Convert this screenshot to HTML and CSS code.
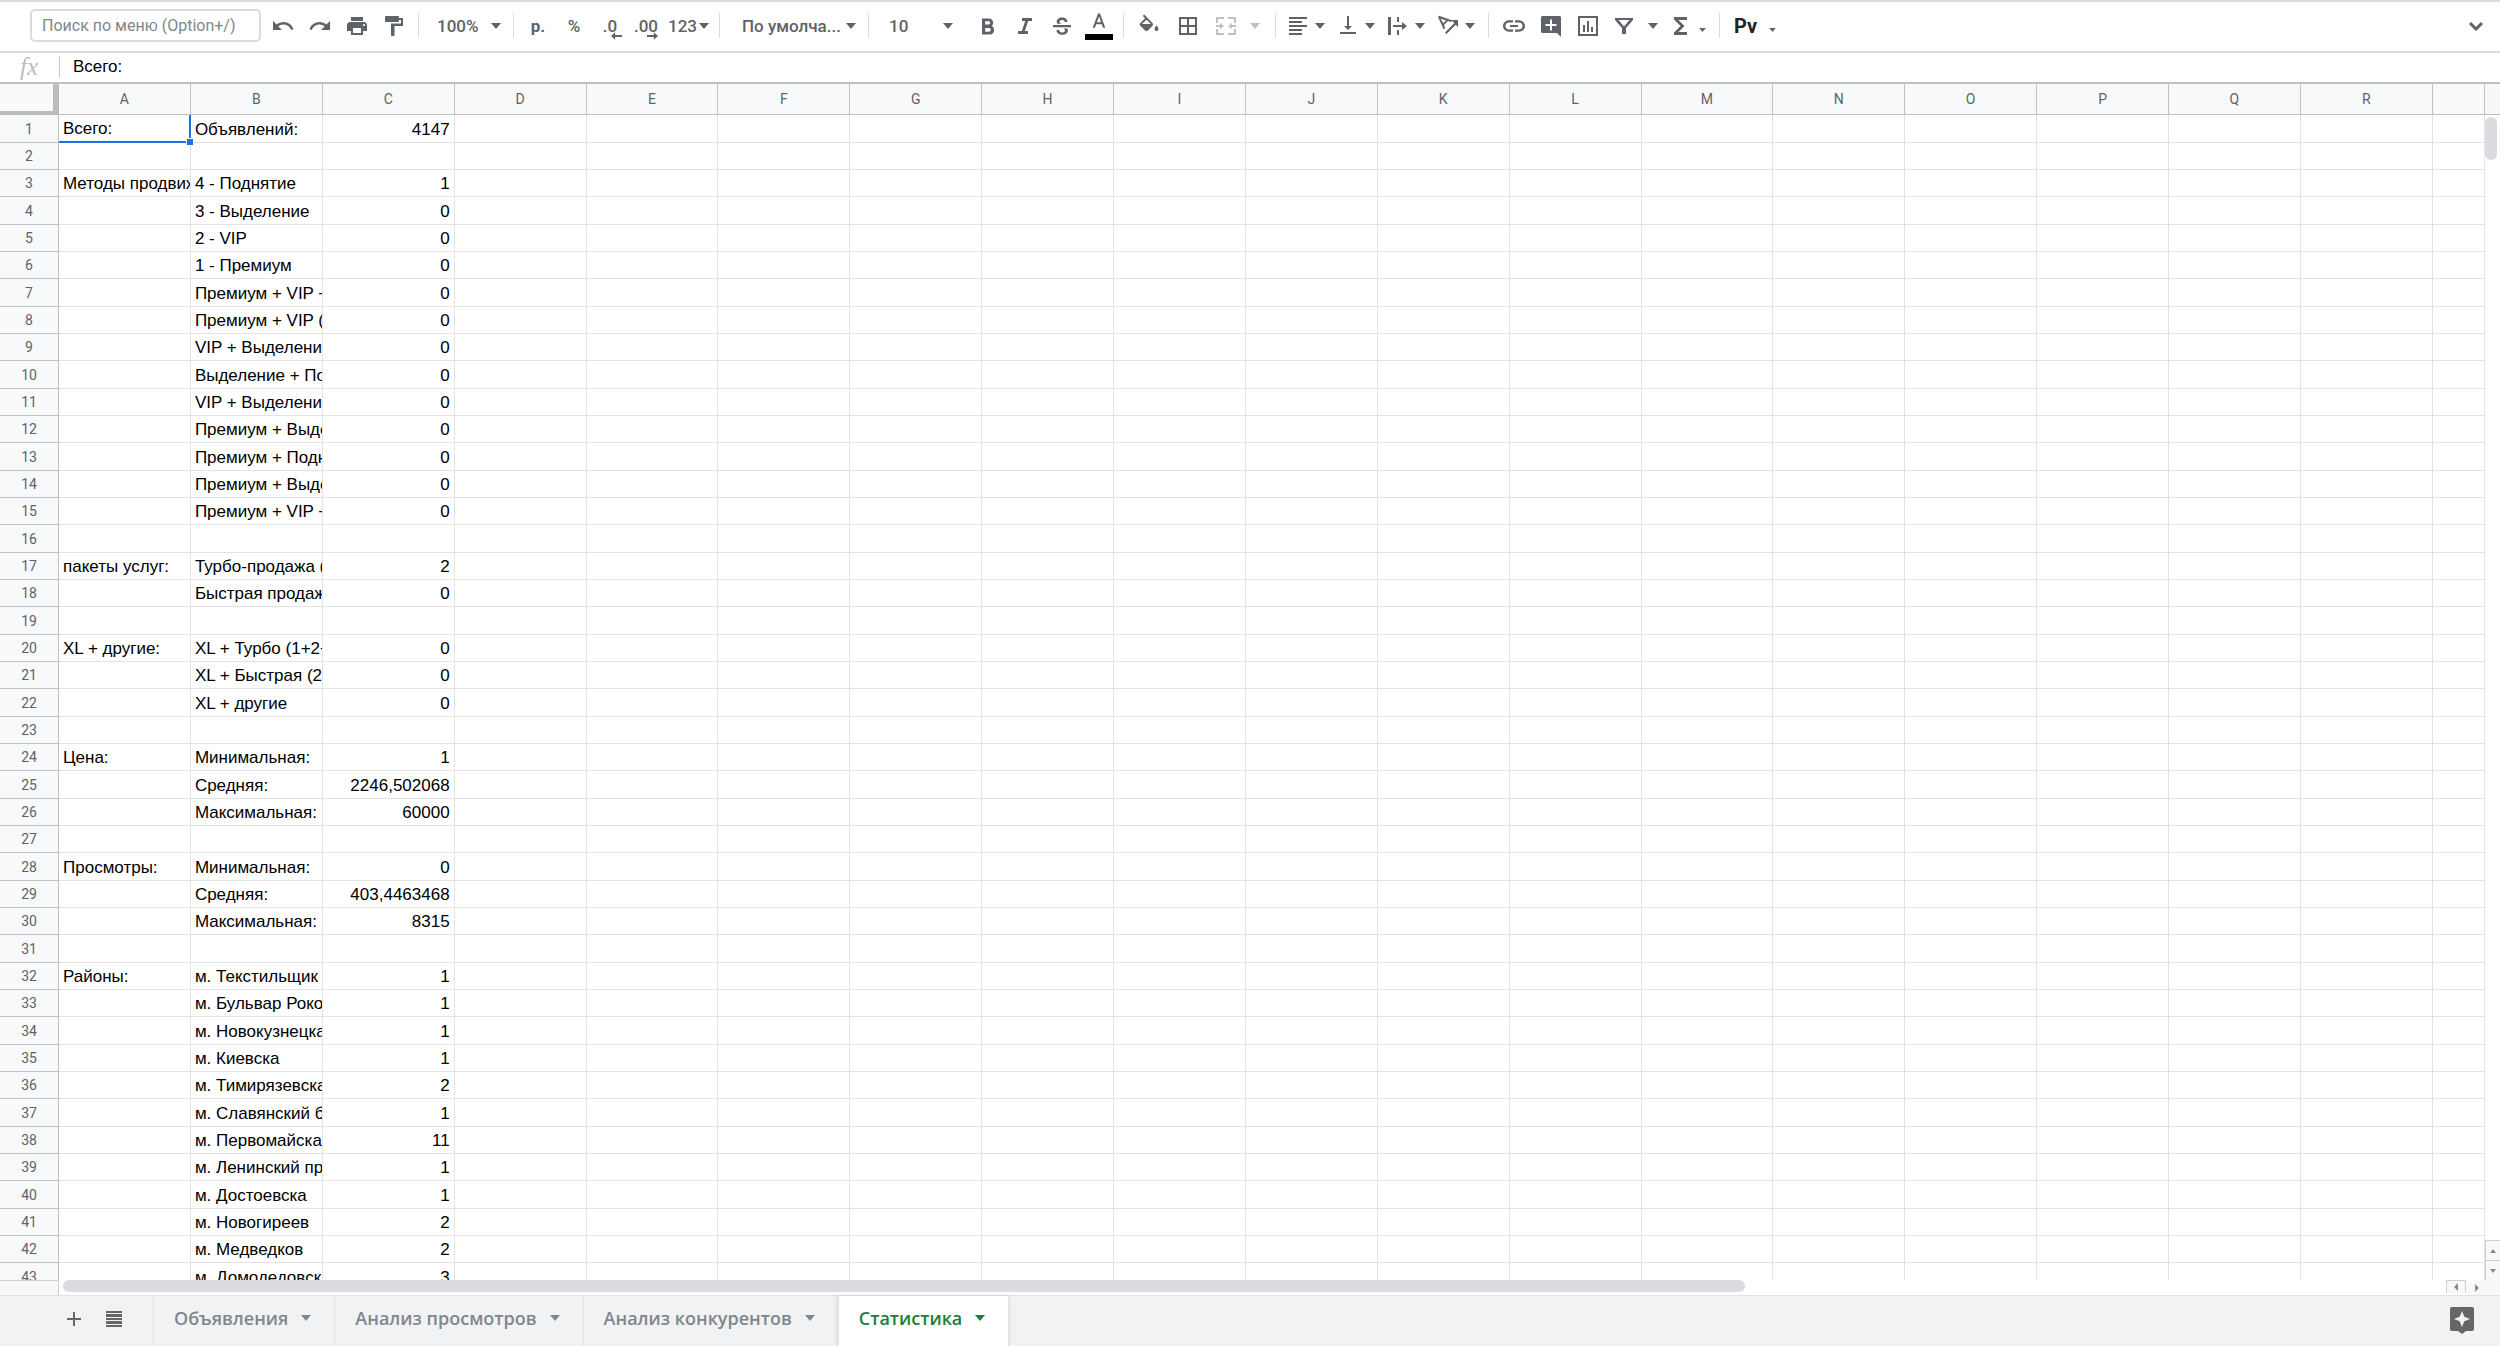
FILE: index.html
```html
<!DOCTYPE html>
<html lang="ru">
<head>
<meta charset="utf-8">
<title>Статистика</title>
<link rel="stylesheet" href="styles.css">
</head>
<body>
<svg class="sprite" aria-hidden="true">
  <symbol id="caret" viewBox="0 0 10 6"><path d="M0 0h10L5 6z"/></symbol>
</svg>

<header class="toolbar">
  <input class="menu-search" type="text" aria-label="Поиск по меню" placeholder="Поиск по меню (Option+/)">
  <div class="group">
    <button class="tool" aria-label="Отменить"><svg viewBox="0 0 24 24"><path d="M12.5 8c-2.65 0-5.05.99-6.9 2.6L2 7v9h9l-3.62-3.62c1.39-1.16 3.16-1.88 5.12-1.88 3.54 0 6.55 2.31 7.6 5.5l2.37-.78C21.080 11.030 17.150 8 12.500 8z"/></svg></button>
    <button class="tool" aria-label="Повторить"><svg viewBox="0 0 24 24"><path d="M18.400 10.600C16.550 8.990 14.150 8 11.500 8c-4.650 0-8.580 3.030-9.960 7.220L3.900 16c1.050-3.190 4.050-5.500 7.600-5.500 1.950 0 3.730.72 5.120 1.880L13 16h9V7l-3.600 3.600z"/></svg></button>
    <button class="tool" aria-label="Печать"><svg viewBox="0 0 24 24"><path d="M19 8H5c-1.660 0-3 1.340-3 3v6h4v4h12v-4h4v-6c0-1.660-1.340-3-3-3zm-3 11H8v-5h8v5zm3-7c-.55 0-1-.45-1-1s.45-1 1-1 1 .45 1 1-.45 1-1 1zm-1-9H6v4h12V3z"/></svg></button>
    <button class="tool" aria-label="Копировать форматирование"><svg viewBox="0 0 24 24"><path d="M17 4V3c0-.55-.45-1-1-1H4c-.55 0-1 .45-1 1v4c0 .55.45 1 1 1h12c.55 0 1-.45 1-1V6h2v3.500H9V21c0 .55.45 1 1 1h1.500c.55 0 1-.45 1-1v-9H21V4h-4z"/></svg></button>
  </div>
  <span class="sep"></span>
  <label class="combo combo-zoom"><select aria-label="Масштаб"><option>100%</option></select><svg class="caret"><use href="#caret"/></svg></label>
  <span class="sep"></span>
  <div class="group narrow">
    <button class="tool strong">р.</button>
    <button class="tool">%</button>
    <button class="tool decimals" aria-label="Уменьшить число знаков">.0<svg viewBox="0 0 12 8"><path d="M4.500 0v3H12v2H4.500v3L0 4z"/></svg></button>
    <button class="tool decimals" aria-label="Увеличить число знаков">.00<svg viewBox="0 0 12 8"><path d="M7.500 0v3H0v2h7.500v3L12 4z"/></svg></button>
  </div>
  <button class="formats">123<svg class="caret"><use href="#caret"/></svg></button>
  <span class="sep"></span>
  <label class="combo combo-font"><select aria-label="Шрифт"><option>По умолча...</option></select><svg class="caret"><use href="#caret"/></svg></label>
  <span class="sep"></span>
  <label class="combo combo-size"><select aria-label="Размер шрифта"><option>10</option></select><svg class="caret"><use href="#caret"/></svg></label>
  <div class="group text-style">
    <button class="tool" aria-label="Полужирный"><svg viewBox="0 0 24 24"><path d="M15.600 11.800c1-.7 1.600-1.800 1.600-2.800 0-2.800-1.900-4.500-4.200-4.500H6v16h7.900c2.300 0 4.200-1.900 4.200-4.300 0-1.800-1-3.500-2.500-4.400zM9.200 7.200h3.300c.9 0 1.600.7 1.600 1.600s-.7 1.700-1.600 1.700H9.200zm3.800 10.500H9.200V14H13c1 0 1.800.8 1.800 1.800s-.8 1.900-1.800 1.900z"/></svg></button>
    <button class="tool" aria-label="Курсив"><svg viewBox="0 0 24 24"><path d="M9 4v3h3.200l-3.400 10H5v3h10v-3h-3.200l3.400-10H19V4z"/></svg></button>
    <button class="tool" aria-label="Зачеркнутый"><svg viewBox="0 0 24 24"><path d="M3 11h18v2.200H3zM17.500 8h-2.700c0-1.400-1-2.100-2.700-2.100-1.600 0-2.600.7-2.600 1.800 0 .8.600 1.500 2 2H7.300C6.900 9.100 6.700 8.400 6.700 7.700 6.700 5.200 8.900 3.500 12.100 3.500c3.300 0 5.400 1.800 5.400 4.500zM6.500 16h2.700c.1 1.600 1.200 2.400 3 2.400 1.700 0 2.700-.7 2.700-1.900 0-.9-.4-1.500-1.400-2h4c.3.600.4 1.200.4 2 0 2.600-2.200 4.300-5.600 4.300-3.500 0-5.700-1.800-5.800-4.800z"/></svg></button>
    <button class="tool color-tool" aria-label="Цвет текста"><svg viewBox="0 0 24 24"><path d="M10.800 3L4.500 20h2.700l1.400-4h6.800l1.400 4h2.700L13.200 3zm-1.300 10.500L12 6.500l2.500 7z"/></svg><span class="swatch"></span></button>
  </div>
  <span class="sep"></span>
  <div class="group spaced">
    <button class="tool" aria-label="Цвет заливки"><svg viewBox="0 0 24 24"><path d="M15.500 8.900L7.200.6 5.800 2l2.300 2.300-5 5c-.6.6-.6 1.500 0 2.100l5.300 5.300c.6.6 1.600.6 2.200 0l5-5c.5-.700.500-1.700-.1-2.800zM5 10l4.500-4.300L14 10zM19.500 11.500s-2 2.200-2 3.500a2 2 0 0 0 4 0c0-1.300-2-3.500-2-3.500z"/></svg></button>
    <button class="tool" aria-label="Границы"><svg viewBox="0 0 24 24"><path d="M3 3v18h18V3zm8 16H5v-6h6zm0-8H5V5h6zm8 8h-6v-6h6zm0-8h-6V5h6z"/></svg></button>
    <button class="tool-wide muted" aria-label="Объединить ячейки"><svg class="icon" viewBox="0 0 24 24"><path d="M2 3h8v2H4v4H2zM14 3h8v6h-2V5h-6zM2 15h2v4h6v2H2zM20 15h2v6h-8v-2h6zM2 11h4V9l4 3-4 3v-2H2zM22 11h-4V9l-4 3 4 3v-2h4z"/></svg><svg class="caret"><use href="#caret"/></svg></button>
  </div>
  <span class="sep"></span>
  <div class="group">
    <button class="tool-menu" aria-label="Горизонтальное выравнивание"><svg class="icon" viewBox="0 0 24 24"><path d="M3 3h18v2H3zM3 7h13v2H3zM3 11h18v2H3zM3 15h13v2H3zM3 19h13v2H3z"/></svg><svg class="caret"><use href="#caret"/></svg></button>
    <button class="tool-menu" aria-label="Вертикальное выравнивание"><svg class="icon" viewBox="0 0 24 24"><path d="M16 12h-3V2h-2v10H8l4 4zM4 18h16v2H4z"/></svg><svg class="caret"><use href="#caret"/></svg></button>
    <button class="tool-menu" aria-label="Перенос текста"><svg class="icon" viewBox="0 0 24 24"><path d="M2 3h3v18H2zM11 3h2v5h-2zM11 16h2v5h-2zM7 11h9V8l5 4-5 4v-3H7z"/></svg><svg class="caret"><use href="#caret"/></svg></button>
    <button class="tool-menu" aria-label="Поворот текста"><svg class="icon" viewBox="0 0 24 24"><path d="M2 3l1.200-1.200L16.500 6.500 15 8l-3-1-4 4 1.200 3L7.700 15.500zM4.600 4.500l2.600 4.800 2.700-2.900zM22 6v7l-2.300-2.300L10.500 20 9 18.500l9.200-9.300L15.800 6z"/></svg><svg class="caret"><use href="#caret"/></svg></button>
  </div>
  <span class="sep"></span>
  <div class="group">
    <button class="tool" aria-label="Вставить ссылку"><svg viewBox="0 0 24 24"><path d="M3.400 12c0-1.900 1.600-3.500 3.600-3.500h4V6.300H7C3.900 6.300 1 8.800 1 12s2.900 5.700 6 5.700h4v-2.200H7c-2 0-3.600-1.600-3.600-3.500zM8 13.100h8v-2.200H8zM17 6.300h-4v2.200h4c2 0 3.600 1.600 3.600 3.500s-1.600 3.500-3.600 3.500h-4v2.200h4c3.100 0 6-2.500 6-5.700s-2.900-5.700-6-5.700z"/></svg></button>
    <button class="tool" aria-label="Добавить комментарий"><svg viewBox="0 0 24 24"><path d="M22 3.500c0-.8-.7-1.500-1.500-1.500h-17C2.700 2 2 2.700 2 3.500v14c0 .8.700 1.500 1.500 1.500H18l4 4zM17.500 12H13v4.500h-2V12H6.500v-2H11V5.500h2V10h4.500z"/></svg></button>
    <button class="tool" aria-label="Вставить диаграмму"><svg viewBox="0 0 24 24"><path d="M2 2v20h20V2zm18 18H4V4h16zM7 11h2v7H7zM11 7h2v11h-2zM15 13h2v5h-2z"/></svg></button>
    <button class="tool-wide" aria-label="Фильтр"><svg class="icon" viewBox="0 0 24 24"><path d="M3 4h18v2l-7 8v6h-4v-6L3 6zm3.500 2l5.500 6.500L17.500 6z"/></svg><svg class="caret"><use href="#caret"/></svg></button>
    <button class="tool-mini" aria-label="Функции"><svg class="icon" viewBox="0 0 24 24"><path d="M18 3H5v2.500l6.500 6.500L5 18.500V21h13v-3H9.500l6-6-6-6H18z"/></svg><svg class="caret"><use href="#caret"/></svg></button>
  </div>
  <span class="sep"></span>
  <button class="input-tools" aria-label="Способ ввода">Pv<svg class="caret"><use href="#caret"/></svg></button>
  <button class="collapse" aria-label="Скрыть меню"><svg viewBox="0 0 16 10"><path d="M2 2l6 6 6-6" fill="none" stroke="#5f6368" stroke-width="3"/></svg></button>
</header>

<div class="formula-bar">
  <span class="fx">fx</span>
  <input class="formula" type="text" aria-label="Строка формул" value="Всего:">
</div>

<main class="sheet">
  <div class="grid-view">
    <table class="cells">
      <colgroup id="columns"></colgroup>
      <thead><tr id="column-names"></tr></thead>
      <tbody id="rows"></tbody>
    </table>
  </div>
  <div class="v-scroll">
    <div class="v-head"></div>
    <div class="v-thumb"></div>
    <button class="v-step" aria-label="Вверх"><svg viewBox="0 0 10 6"><path d="M2 5h6L5 1z"/></svg></button>
    <button class="v-step" aria-label="Вниз"><svg viewBox="0 0 10 6"><path d="M2 1h6L5 5z"/></svg></button>
  </div>
  <div class="h-scroll">
    <div class="h-head"></div>
    <div class="h-track"><div class="h-thumb"></div></div>
    <button class="h-step" aria-label="Влево"><svg viewBox="0 0 6 8"><path d="M5 0v8L1 4z"/></svg></button>
    <button class="h-step plain" aria-label="Вправо"><svg viewBox="0 0 6 8"><path d="M1 0v8l4-4z"/></svg></button>
  </div>
</main>

<footer class="tab-bar">
  <div class="tab-tools">
    <button aria-label="Добавить лист"><svg viewBox="0 0 16 16"><path d="M7 1h2v6h6v2H9v6H7V9H1V7h6z"/></svg></button>
    <button aria-label="Все листы"><svg viewBox="0 0 16 16"><path d="M0 0h16v2H0zM0 3h16v3H0zM0 7h16v2H0zM0 10h16v3H0zM0 14h16v2H0z"/></svg></button>
  </div>
  <nav class="tabs">
    <button class="tab">Объявления<svg class="caret"><use href="#caret"/></svg></button>
    <button class="tab">Анализ просмотров<svg class="caret"><use href="#caret"/></svg></button>
    <button class="tab">Анализ конкурентов<svg class="caret"><use href="#caret"/></svg></button>
    <button class="tab active">Статистика<svg class="caret"><use href="#caret"/></svg></button>
  </nav>
  <button class="explore" aria-label="Анализ данных"><svg viewBox="0 0 24 27"><path fill-rule="evenodd" d="M2 0h20a2 2 0 0 1 2 2v20a2 2 0 0 1-2 2h-6l-4 3-4-3H2a2 2 0 0 1-2-2V2a2 2 0 0 1 2-2zm10 4l-2.300 5.700L4 12l5.700 2.300L12 20l2.300-5.700L20 12l-5.700-2.300z"/></svg></button>
</footer>
<script src="app.js"></script>
</body>
</html>
```
FILE: styles.css
```css
* {
  box-sizing: border-box;
}

body {
  margin: 0;
  height: 100vh;
  display: flex;
  flex-direction: column;
  overflow: hidden;
  background: #fff;
  font-family: Roboto, "Noto Sans", sans-serif;
  color: #000;
}

button,
input,
select {
  font: inherit;
  color: inherit;
  border: 0;
  padding: 0;
  margin: 0;
  background: none;
}

svg {
  display: block;
  flex: none;
  fill: currentColor;
}

.sprite {
  position: absolute;
  width: 0;
  height: 0;
}

.caret {
  width: 10px;
  height: 6px;
}

/* Toolbar */

.toolbar {
  flex: none;
  display: flex;
  align-items: center;
  height: 53px;
  padding: 0 16px 2px 30px;
  border-top: 2px solid #dadce0;
  border-bottom: 2px solid #dadce0;
  color: #5f6368;
  font-size: 17px;
  font-weight: 500;
}

.menu-search {
  width: 231px;
  height: 33px;
  margin-right: 3px;
  padding: 0 10px;
  border: 2px solid #dadce0;
  border-radius: 5px;
  font-size: 16px;
  font-weight: 400;
}

.menu-search::placeholder {
  color: #80868b;
  opacity: 1;
}

.group {
  display: flex;
}

.spaced {
  gap: 2px;
}

.text-style {
  margin-left: 10px;
}

.sep {
  width: 1px;
  height: 25px;
  margin: 0 6px;
  background: #dadce0;
}

.tool {
  display: flex;
  align-items: center;
  justify-content: center;
  width: 37px;
  height: 36px;
}

.narrow .tool {
  width: 36px;
}

.tool svg,
.icon {
  width: 24px;
  height: 24px;
}

.strong {
  font-weight: 700;
}

.tool.decimals {
  position: relative;
}

.tool.decimals svg {
  position: absolute;
  right: 6px;
  bottom: 4px;
  width: 11px;
  height: 8px;
}

.color-tool {
  flex-direction: column;
}

.tool.color-tool svg {
  width: 20px;
  height: 20px;
}

.swatch {
  width: 28px;
  height: 6px;
  margin-top: 3px;
  background: #000;
}

.combo {
  position: relative;
  display: flex;
  align-items: center;
  height: 36px;
}

.combo select {
  width: 100%;
  height: 100%;
  padding-left: 14px;
  appearance: none;
}

.combo .caret {
  position: absolute;
  right: 6px;
  pointer-events: none;
}

.combo-zoom {
  width: 82px;
}

.combo-zoom select {
  padding-left: 12px;
}

.combo-font {
  width: 136px;
}

.combo-font select {
  padding-left: 16px;
}

.combo-size {
  width: 84px;
}

.formats {
  display: flex;
  align-items: center;
  width: 49px;
  gap: 2px;
  padding-left: 4px;
}

.tool-wide {
  display: flex;
  align-items: center;
  gap: 12px;
  width: 61px;
  padding-left: 6px;
}

.tool-menu {
  display: flex;
  align-items: center;
  gap: 5px;
  width: 50px;
  padding-left: 4px;
}

.tool-mini {
  display: flex;
  align-items: center;
  gap: 6px;
  width: 46px;
  padding-left: 2px;
}

.muted {
  color: #bdc1c6;
}

.tool-mini .caret,
.input-tools .caret {
  width: 7px;
  height: 4px;
  margin-top: 8px;
  color: #5f6368;
}

.input-tools {
  display: flex;
  align-items: center;
  gap: 12px;
  padding-left: 8px;
  color: #202124;
  font-weight: 700;
  font-size: 20px;
}

.collapse {
  margin-left: auto;
}

.collapse svg {
  width: 16px;
  height: 10px;
}

/* Formula bar */

.formula-bar {
  flex: none;
  display: flex;
  align-items: center;
  height: 29px;
  padding-bottom: 2px;
}

.fx {
  width: 60px;
  padding-left: 20px;
  border-right: 1px solid #c8c8c8;
  color: #bdbdbd;
  font: italic 25px/21px "Liberation Serif", serif;
}

.formula {
  flex: 1;
  padding-left: 13px;
  font: 17px/24px "Liberation Sans", Arial, sans-serif;
}

/* Sheet */

.sheet {
  flex: 1;
  min-height: 0;
  display: grid;
  grid-template-columns: 1fr 15px;
  grid-template-rows: 1fr 15px;
  border-top: 2px solid #c0c0c0;
}

.grid-view {
  min-height: 0;
  overflow: hidden;
}

.cells {
  width: 100%;
  table-layout: fixed;
  border-collapse: separate;
  border-spacing: 0;
  font: 17px/24px "Liberation Sans", Arial, sans-serif;
}

.col-head {
  width: 59px;
}

.col-rest {
  width: 52px;
}

.cells th {
  padding: 0;
  border-right: 1px solid #c0c0c0;
  border-bottom: 1px solid #c0c0c0;
  background: #f8f9fa;
  color: #5f6368;
  font: 14px/24px Roboto, sans-serif;
}

.cells thead th {
  height: 31px;
}

.cells thead .corner {
  border-right: 6px solid #bcbcbc;
  border-bottom: 4px solid #bcbcbc;
}

.cells tbody tr {
  height: 27px;
}

.cells tbody tr:nth-child(3n + 1) {
  height: 28px;
}

.cells td {
  padding: 2px 4px 0;
  border-right: 1px solid #e2e3e3;
  border-bottom: 1px solid #e2e3e3;
  overflow: hidden;
  white-space: nowrap;
}

.cells .number {
  text-align: right;
}

.cells .selected {
  position: relative;
  overflow: visible;
  border-right: 2px solid #1a73e8;
  border-bottom: 2px solid #1a73e8;
}

.selected .handle {
  position: absolute;
  right: -5px;
  bottom: -5px;
  width: 8px;
  height: 8px;
  border: 1px solid #fff;
  background: #1a73e8;
}

/* Scroll bars */

.v-scroll {
  display: flex;
  flex-direction: column;
  color: #8a8a8a;
}

.v-head {
  height: 31px;
  border-bottom: 1px solid #c0c0c0;
  background: #f8f8f8;
}

.v-thumb {
  width: 12px;
  height: 43px;
  margin: 2px 0 auto;
  border-radius: 6px;
  background: #dadce0;
}

.v-step {
  display: flex;
  align-items: center;
  justify-content: center;
  height: 20px;
  border: solid #d0d0d0;
  border-width: 1px 0 0 1px;
  background: #f8f8f8;
}

.v-step svg {
  width: 10px;
  height: 6px;
}

.h-scroll {
  grid-column: 1 / -1;
  display: flex;
  color: #8a8a8a;
}

.h-head {
  width: 59px;
  border: solid #d0d0d0;
  border-width: 1px 1px 0 0;
  background: #f8f8f8;
}

.h-track {
  flex: 1;
  padding-left: 4px;
}

.h-thumb {
  width: 70.6%;
  height: 12px;
  border-radius: 6px;
  background: #dadce0;
}

.h-step {
  display: flex;
  align-items: center;
  justify-content: center;
  width: 20px;
  height: 13px;
  border: solid #d0d0d0;
  border-width: 1px 1px 0;
  background: #f8f8f8;
}

.h-step.plain {
  width: 34px;
  height: 15px;
  padding-right: 12px;
  border: 0;
}

.h-step svg {
  width: 6px;
  height: 8px;
}

/* Sheet tabs */

.tab-bar {
  flex: none;
  display: flex;
  align-items: center;
  height: 51px;
  padding: 0 26px 2px 0;
  border-top: 1px solid #e0e2e6;
  background: #f0f2f4;
}

.tab-tools {
  display: flex;
  gap: 24px;
  width: 153px;
  padding: 0 0 2px 66px;
  color: #666;
}

.tab-tools svg {
  width: 16px;
  height: 16px;
}

.tabs {
  display: flex;
  align-self: stretch;
  margin-bottom: -2px;
}

.tab {
  display: flex;
  align-items: center;
  gap: 13px;
  padding: 0 23px 6px 20px;
  border-left: 1px solid #e0e2e6;
  color: #80868b;
  font: 600 18px/24px "Open Sans", "Noto Sans", sans-serif;
}

.tab.active {
  background: #fff;
  color: #188038;
  box-shadow: 0 1px 3px 1px rgba(60, 64, 67, 0.15);
}

.explore {
  margin-left: auto;
  color: #666;
}

.explore svg {
  width: 24px;
  height: 27px;
}
```
FILE: app.js
```js
const letters = [..."ABCDEFGHIJKLMNOPQR"];

// Row number -> values of columns A, B and C.
const data = {
  1: ["Всего:", "Объявлений:", "4147"],
  3: ["Методы продвижения:", "4 - Поднятие", "1"],
  4: ["", "3 - Выделение", "0"],
  5: ["", "2 - VIP", "0"],
  6: ["", "1 - Премиум", "0"],
  7: ["", "Премиум + VIP + Выделение", "0"],
  8: ["", "Премиум + VIP (1+2)", "0"],
  9: ["", "VIP + Выделение", "0"],
  10: ["", "Выделение + Поднятие", "0"],
  11: ["", "VIP + Выделение", "0"],
  12: ["", "Премиум + Выделение", "0"],
  13: ["", "Премиум + Поднятие", "0"],
  14: ["", "Премиум + Выделение", "0"],
  15: ["", "Премиум + VIP + Поднятие", "0"],
  17: ["пакеты услуг:", "Турбо-продажа (1+2)", "2"],
  18: ["", "Быстрая продажа", "0"],
  20: ["XL + другие:", "XL + Турбо (1+2+3)", "0"],
  21: ["", "XL + Быстрая (2+3)", "0"],
  22: ["", "XL + другие", "0"],
  24: ["Цена:", "Минимальная:", "1"],
  25: ["", "Средняя:", "2246,502068"],
  26: ["", "Максимальная:", "60000"],
  28: ["Просмотры:", "Минимальная:", "0"],
  29: ["", "Средняя:", "403,4463468"],
  30: ["", "Максимальная:", "8315"],
  32: ["Районы:", "м. Текстильщик", "1"],
  33: ["", "м. Бульвар Рокоссовского", "1"],
  34: ["", "м. Новокузнецка", "1"],
  35: ["", "м. Киевска", "1"],
  36: ["", "м. Тимирязевска", "2"],
  37: ["", "м. Славянский бульвар", "1"],
  38: ["", "м. Первомайска", "11"],
  39: ["", "м. Ленинский проспект", "1"],
  40: ["", "м. Достоевска", "1"],
  41: ["", "м. Новогиреев", "2"],
  42: ["", "м. Медведков", "2"],
  43: ["", "м. Домодедовска", "3"]
};

document.getElementById("columns").innerHTML =
  '<col class="col-head">' + "<col>".repeat(letters.length) + '<col class="col-rest">';

document.getElementById("column-names").innerHTML =
  '<th class="corner"></th>' +
  letters.map((letter) => `<th scope="col">${letter}</th>`).join("") +
  "<th></th>";

let rows = "";
for (let n = 1; n <= 43; n++) {
  const [a, b, c] = data[n] || ["", "", ""];
  const first = n === 1
    ? `<td class="selected">${a}<span class="handle"></span></td>`
    : `<td>${a}</td>`;
  rows += `<tr><th scope="row">${n}</th>${first}<td>${b}</td><td class="number">${c}</td>` +
    "<td></td>".repeat(letters.length - 2) + "</tr>";
}
document.getElementById("rows").innerHTML = rows;
```
